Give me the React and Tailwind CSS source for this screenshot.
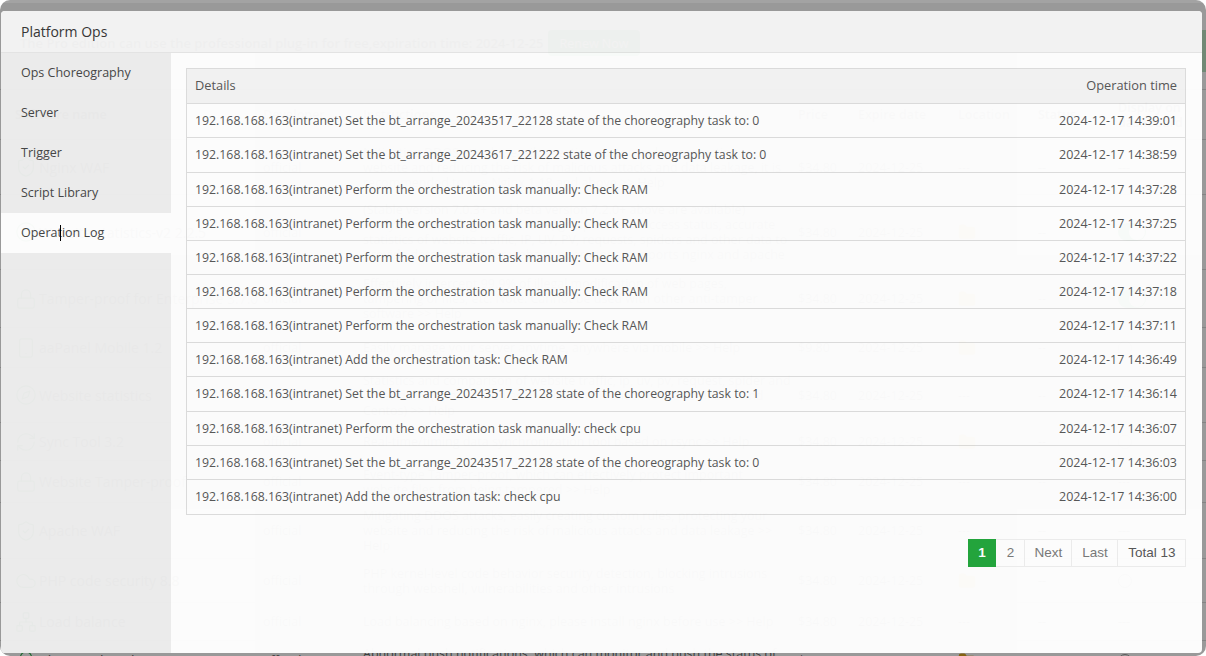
import { Cloud, Compass, Folder, Lock, Network, RefreshCw, ShieldCheck, Smartphone, Bell } from "lucide-react";

const plugins = [
  { name: "Nginx WAF", icon: ShieldCheck, h: "h-[55px]", lines: ["Mitigating DDOS attacks, easily creating custom rules, protecting your", "website and reducing the risk of malicious attacks and data leakage, it is", "recommended to use Nginx 1.18 and above  >> Help"], price: "$34.80", folder: false, toggle: "---" },
  { name: "Website statistics-v2 2.2.5", icon: Compass, h: "h-[75px]", lines: ["(Stable version 7.0.3+ and beta version 7.2.0+ above are available)", "Analyze website logs in real time, grasp website access status, accurate", "statistics of website traffic, IP, UV, PV, requests, spiders and other data to", "provide data support for website operations, supports nginx and apache"], price: "$34.80", folder: true, toggle: "on" },
  { name: "Tamper-proof for Enterprise 3.7.0", icon: Lock, h: "h-[58px]", lines: ["Effectively intercept 99.9% of illegal modification of web pages,", "tampering of files, etc. Note: Cannot be used with other anti-tamper", "software  >> Help"], price: "$34.80", folder: true, toggle: "on" },
  { name: "aaPanel Mobile 1.2", icon: Smartphone, h: "h-[40px]", lines: ["Easily manage your server anytime, anywhere via mobile >> Help"], price: "$9.80", folder: true, toggle: "off" },
  { name: "Website statistics", icon: Compass, h: "h-[55px]", lines: ["Statistics and comparison of website traffic, ip, uv, pv, request, spider and", "other data. (Can be used as a website visit check tool after install and", "Centos)  >> Help"], price: "$34.80", folder: false, toggle: "---" },
  { name: "Sync Tool 3.2", icon: RefreshCw, h: "h-[38px]", lines: ["Real-time/timing data synchronization tool based on rsync >> Help"], price: "$34.80", folder: true, toggle: "off" },
  { name: "Website Tamper-proof", icon: Lock, h: "h-[42px]", lines: ["Event-type Tamper-proof, which can effectively protect important", "website files from being tampered >> Help"], price: "$34.80", folder: false, toggle: "---" },
  { name: "Apache WAF", icon: ShieldCheck, h: "h-[56px]", lines: ["Mitigating DDOS attacks, easily creating custom rules, protecting your", "website and reducing the risk of malicious attacks and data leakage >>", "Help"], price: "$34.80", folder: false, toggle: "---" },
  { name: "PHP code security 8.8", icon: Cloud, h: "h-[44px]", lines: ["PHP kernel-level code behavior security detection, blocking intrusions", "through webshell, vulnerabilities and other intrusions"], price: "$34.80", folder: true, toggle: "off" },
  { name: "Load balance", icon: Network, h: "h-[38px]", lines: ["Load balancing based on nginx, please install nginx before use >> Help"], price: "$34.80", folder: false, toggle: "---" },
  { name: "Abnormal push 1.4", icon: Bell, h: "h-[40px]", lines: ["Abnormal push notifications, which can monitor and push the status of", "services >> Help"], price: "$9.80", folder: true, toggle: "off" },
];

const tabs = ["Ops Choreography", "Server", "Trigger", "Script Library", "Operation Log"];

const logs = [
  ["192.168.168.163(intranet) Set the bt_arrange_20243517_22128 state of the choreography task to: 0", "2024-12-17 14:39:01"],
  ["192.168.168.163(intranet) Set the bt_arrange_20243617_221222 state of the choreography task to: 0", "2024-12-17 14:38:59"],
  ["192.168.168.163(intranet) Perform the orchestration task manually: Check RAM", "2024-12-17 14:37:28"],
  ["192.168.168.163(intranet) Perform the orchestration task manually: Check RAM", "2024-12-17 14:37:25"],
  ["192.168.168.163(intranet) Perform the orchestration task manually: Check RAM", "2024-12-17 14:37:22"],
  ["192.168.168.163(intranet) Perform the orchestration task manually: Check RAM", "2024-12-17 14:37:18"],
  ["192.168.168.163(intranet) Perform the orchestration task manually: Check RAM", "2024-12-17 14:37:11"],
  ["192.168.168.163(intranet) Add the orchestration task: Check RAM", "2024-12-17 14:36:49"],
  ["192.168.168.163(intranet) Set the bt_arrange_20243517_22128 state of the choreography task to: 1", "2024-12-17 14:36:14"],
  ["192.168.168.163(intranet) Perform the orchestration task manually: check cpu", "2024-12-17 14:36:07"],
  ["192.168.168.163(intranet) Set the bt_arrange_20243517_22128 state of the choreography task to: 0", "2024-12-17 14:36:03"],
  ["192.168.168.163(intranet) Add the orchestration task: check cpu", "2024-12-17 14:36:00"],
];

const rowHeights = ["h-[34px]", "h-[35px]", "h-[34px]", "h-[34px]", "h-[34px]", "h-[34px]", "h-[34px]", "h-[34px]", "h-[35px]", "h-[34px]", "h-[34px]", "h-[34px]"];

const cols = "grid grid-cols-[248px_100px_435px_60px_100px_80px_80px_88px] items-center";

function PluginPage() {
  return (
    <div className="h-[656px] overflow-hidden bg-white text-[12.5px] leading-[15px] text-[#666]">
      <div className="flex h-[90px] items-start justify-between border-b border-[#ddd] pt-[30px] pl-[20px]">
        <div className="flex items-center gap-[15px]">
          <span className="w-[513px] text-[13px] leading-[26px] font-semibold whitespace-nowrap text-[#555]">The Pro edition can use the professional plug-in for free,expiration time: 2024-12-25</span>
          <span className="flex h-[26px] w-[92px] items-center justify-center rounded-sm bg-[#20a53a] text-white">Renew Now</span>
        </div>
        <span className="h-[42px] w-1 bg-[#20a53a]/30" />
      </div>
      <div className={`${cols} h-[50px] border-b border-[#ddd] pl-[15px] font-semibold`}>
        <span>Software name</span>
        <span>Developer</span>
        <span>Instructions</span>
        <span>Price</span>
        <span>Expire date</span>
        <span>Location</span>
        <span>Status</span>
        <span>Display on<br />dashboard</span>
      </div>
      {plugins.map((p) => (
        <div key={p.name} className={`${cols} ${p.h} border-b border-[#ddd] pl-[15px]`}>
          <span className="flex items-center gap-[2px] overflow-hidden whitespace-nowrap">
            <p.icon size={22} strokeWidth={1.2} className="shrink-0 text-[#20a53a]" />
            <span className="text-[14px]">{p.name}</span>
          </span>
          <span>official</span>
          <span>
            {p.lines.map((l) => (
              <span key={l} className="block whitespace-nowrap">{l}</span>
            ))}
          </span>
          <span>{p.price}</span>
          <span>2024-12-25</span>
          <span>{p.folder ? <Folder size={18} className="fill-[#dda520] text-[#dda520]" /> : "---"}</span>
          <span>--</span>
          <span>
            {p.toggle === "---" ? "---" : null}
            {p.toggle === "on" ? <span className="flex h-[18px] w-7 justify-end rounded-full bg-[#20a53a] p-px"><span className="size-4 rounded-full bg-white" /></span> : null}
            {p.toggle === "off" ? <span className="block h-[14px] w-[14px] rounded-full border border-[#999]" /> : null}
          </span>
        </div>
      ))}
    </div>
  );
}

export default function App() {
  return (
    <div className="relative h-[656px] w-[1206px] overflow-hidden rounded-[10px] bg-white font-['Open_Sans','Noto_Sans',sans-serif]">
      <PluginPage />
      <div className="absolute inset-0 bg-black/40" />
      <div className="absolute inset-x-0 top-0 h-[3px] bg-white/10" />

      <div className="absolute top-[11px] left-px flex h-[642px] w-[1201px] flex-col overflow-hidden rounded-[4px] bg-white opacity-[.97]">
        <div className="flex h-[42px] shrink-0 items-center border-b border-[#e6e6e6] bg-[#f5f5f5] pl-[20px] text-[14px] text-[#333]">
          Platform Ops
        </div>
        <div className="flex min-h-0 flex-1">
          <div className="w-[170px] shrink-0 bg-[#eeeeee]">
            {tabs.map((t) => (
              <div key={t} className={`flex h-10 items-center pl-[20px] text-[12.5px] text-[#444] ${t === "Operation Log" ? "bg-white" : ""}`}>
                {t}
              </div>
            ))}
          </div>
          <div className="min-w-0 flex-1 pt-[15px] pr-[16px] pl-[15px]">
            <div className="border border-[#ddd] text-[12.3px] text-[#555]">
              <div className="flex h-[35px] items-center justify-between border-b border-[#ddd] bg-[#f4f4f4] px-2 text-[12.8px]">
                <span>Details</span>
                <span>Operation time</span>
              </div>
              {logs.map(([detail, time], i) => (
                <div key={i} className={`flex items-center justify-between px-2 pt-px ${rowHeights[i]} ${i < logs.length - 1 ? "border-b border-[#ddd]" : ""}`}>
                  <span>{detail}</span>
                  <span className="text-[12.5px]">{time}</span>
                </div>
              ))}
            </div>
            <div className="mt-6 flex justify-end font-['Liberation_Sans',sans-serif] text-[13.5px] text-[#777]">
              <span className="flex h-7 w-7 items-center justify-center bg-[#20a53a] font-bold text-white">1</span>
              <span className="flex h-7 w-[29px] items-center justify-center border border-l-0 border-[#eee] pl-px">2</span>
              <span className="flex h-7 w-[47px] items-center justify-center border border-l-0 border-[#eee] pl-px">Next</span>
              <span className="flex h-7 w-[46px] items-center justify-center border border-l-0 border-[#eee] pl-px">Last</span>
              <span className="flex h-7 w-[68px] items-center justify-center border border-l-0 border-[#eee] pl-px text-[#555]">Total 13</span>
            </div>
          </div>
        </div>
      </div>

      {/* text cursor sitting over the active tab */}
      <span className="absolute top-[225px] left-[60px] h-[16px] w-px bg-black" />
    </div>
  );
}
